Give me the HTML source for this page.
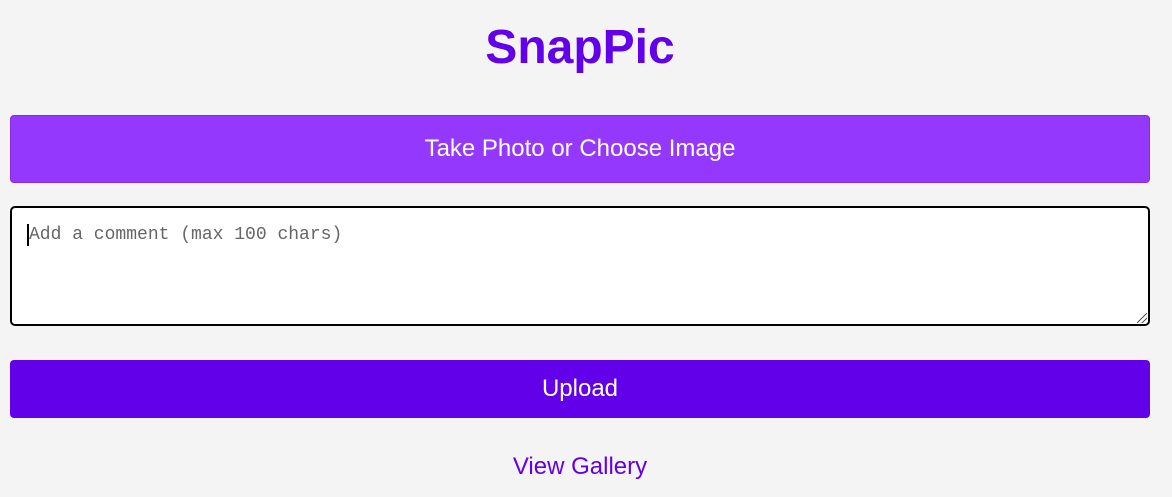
<!DOCTYPE html>
<html><head><style>
body{margin:0;background:#f4f4f4;font-family:"Liberation Sans",Arial,sans-serif;width:1172px;height:497px;overflow:hidden;position:relative}
h1{position:absolute;top:3px;left:0;width:1160px;margin:0;text-align:center;font-size:48px;line-height:90px;color:#6200ea;font-weight:bold}
.b1{position:absolute;left:10px;top:115px;width:1140px;height:68px;background:#9538fd;border-radius:4px;color:#fff;font-size:24px;line-height:66px;text-align:center;box-sizing:border-box;border:1px solid #8a2be2}
.ta{position:absolute;left:10px;top:206px;width:1140px;height:120px;box-sizing:border-box;background:#fff;border:2px solid #000;border-radius:5px}
.ta span{position:absolute;left:15px;top:16px;font-family:"Liberation Mono",monospace;font-size:18px;color:#666;border-left:2px solid #000;line-height:22px}
.ta i{position:absolute;right:1px;bottom:1px;width:10px;height:10px;background:linear-gradient(135deg,transparent 45%,#555 46%,#555 54%,transparent 55%,transparent 70%,#555 71%,#555 79%,transparent 80%)}
.b2{position:absolute;left:10px;top:360px;width:1140px;height:58px;background:#6200ea;border-radius:4px;color:#fff;font-size:24px;line-height:58px;text-align:center}
.lk{position:absolute;left:0;top:453px;width:1160px;text-align:center;color:#6200ea;font-size:24px;line-height:28px}
</style></head><body>
<h1>SnapPic</h1>
<div class="b1">Take Photo or Choose Image</div>
<div class="ta"><span>Add a comment (max 100 chars)</span><i></i></div>
<div class="b2">Upload</div>
<div class="lk">View Gallery</div>
</body></html>
